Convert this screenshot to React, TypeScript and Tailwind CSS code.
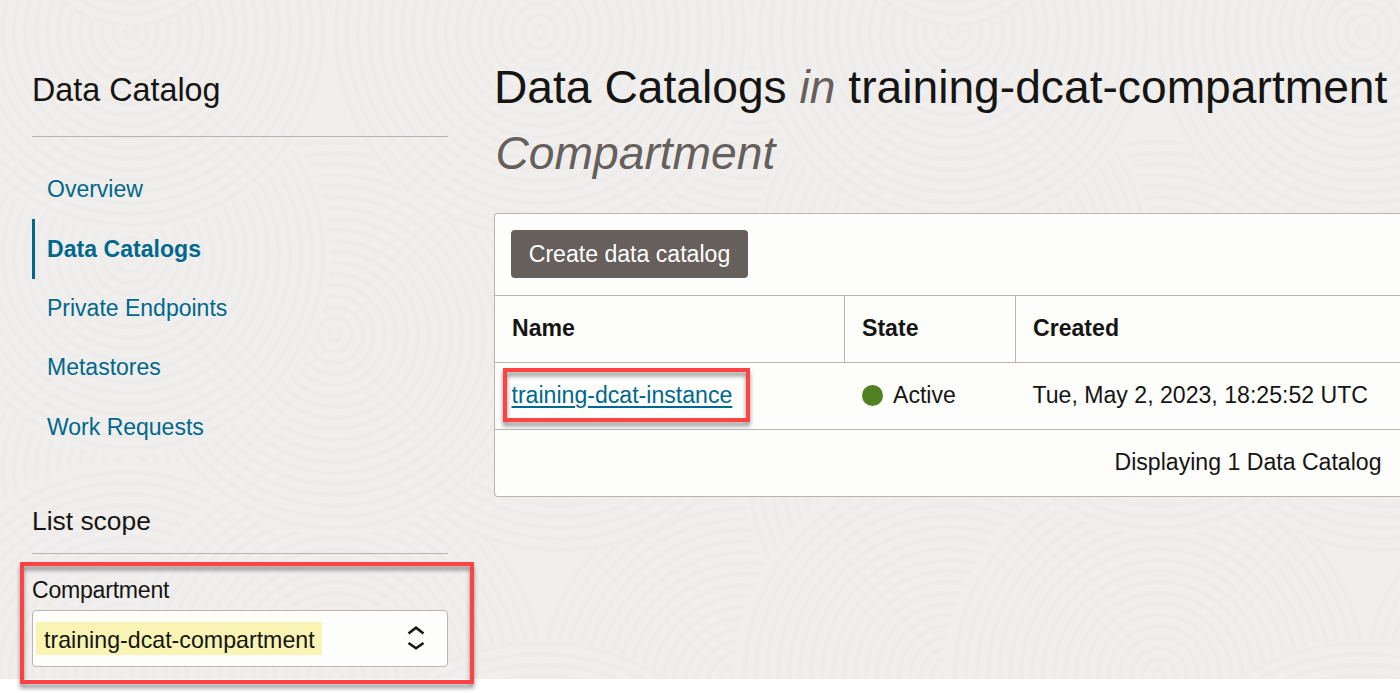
import { Fragment } from "react";

const TILE = 823;

const SWIRLS = [
  { x: 130, y: 470, r: 210 },
  { x: 750, y: 330, r: 210 },
  { x: 126, y: 676, r: 215 },
  { x: 745, y: 690, r: 215 },
  { x: 336, y: 676, r: 215 },
  { x: 540, y: 880, r: 240 },
  { x: 560, y: 335, r: 217 },
  { x: 335, y: 335, r: 200 },
  { x: 130, y: 255, r: 200 },
  { x: 750, y: 40, r: 195 },
  { x: 335, y: -120, r: 130 },
  { x: 130, y: 32, r: 200 },
  { x: 540, y: 32, r: 210 },
  { x: 336, y: -170, r: 150 },
  { x: 130, y: -80, r: 108 },
];

const RINGS = Array.from({ length: 24 }, (_, i) => 6 + i * 11);

function Texture() {
  return (
    <svg className="absolute inset-0 h-full w-full" aria-hidden="true">
      {[-TILE, 0, TILE].map((dx) => (
        <g key={dx} transform={`translate(${dx} 0)`}>
          {SWIRLS.map((s, i) => (
            <Fragment key={i}>
              <circle cx={s.x} cy={s.y} r={s.r} fill="#f0efed" />
              {RINGS.filter((r) => r < s.r).map((r) => (
                <circle key={r} cx={s.x} cy={s.y} r={r} fill="none" stroke="#edecea" strokeWidth="4.5" />
              ))}
            </Fragment>
          ))}
        </g>
      ))}
    </svg>
  );
}

const NAV = [
  { label: "Overview" },
  { label: "Data Catalogs", active: true },
  { label: "Private Endpoints" },
  { label: "Metastores" },
  { label: "Work Requests" },
];

function Sidebar() {
  return (
    <aside className="w-[416px] shrink-0">
      <h2 className="flex h-[137px] items-center border-b border-[#bab5af] pt-[45px] text-[32.3px] leading-none">
        Data Catalog
      </h2>
      <nav className="pt-[22.6px]">
        {NAV.map((item) => (
          <a
            key={item.label}
            className={
              item.active
                ? "flex h-[59.6px] items-center border-l-3 border-[#00688c] pt-px pl-3 font-bold text-[#00688c]"
                : "flex h-[59.4px] items-center pl-[15px] text-[23px] text-[#00688c]"
            }
          >
            {item.label}
          </a>
        ))}
      </nav>
      <h3 className="mt-[48.8px] flex h-[48px] items-start border-b border-[#bab5af] text-[26.4px] leading-[30px]">
        List scope
      </h3>
      <div className="relative pt-[21px]">
        <label className="block leading-[30px] tracking-[-0.25px]">Compartment</label>
        <div className="mt-[5px] flex h-[57px] items-center justify-between rounded border border-[#bab5af] bg-[#fdfdfc] pr-[22px] pl-[3px]">
          <span className="h-[33px] w-[286px] bg-[#f9f3b4] px-2 text-[23.2px] leading-[36px] whitespace-nowrap">
            training-dcat-compartment
          </span>
          <svg width="18" height="26" viewBox="0 0 18 26" fill="none" stroke="#161513" strokeWidth="2.5">
            <path d="M1.500 8.500 9 2.700l7.500 5.800M1.500 18 9 23.300l7.500-5.300" />
          </svg>
        </div>
        <div className="absolute top-[8px] -left-[12px] h-[122px] w-[454px] border-4 border-[#ff4343] drop-shadow-[0_4px_2px_rgba(0,0,0,0.42)]" />
      </div>
    </aside>
  );
}

function CatalogTable() {
  return (
    <section className="mt-[27px] rounded-l border border-r-0 border-[#bab5af] bg-[#fdfdfc]">
      <div className="flex h-[81px] items-start pt-4 pl-4">
        <button className="h-12 w-[237px] rounded bg-[#665f5b] pt-px text-center whitespace-nowrap text-white">
          Create data catalog
        </button>
      </div>
      <div className="grid h-[68px] grid-cols-[350px_171px_1fr] border-y border-[#bab5af] font-bold">
        <div className="flex items-center border-r border-[#bab5af] pl-[17px]">Name</div>
        <div className="flex items-center border-r border-[#bab5af] pl-[17px]">State</div>
        <div className="flex items-center pl-[17px]">Created</div>
      </div>
      <div className="grid h-[67px] grid-cols-[350px_171px_1fr] border-b border-[#bab5af]">
        <div className="relative flex items-center pl-[16.5px]">
          <a className="text-[#00688c] underline decoration-2 underline-offset-3">training-dcat-instance</a>
          <div className="absolute top-[5px] left-[8px] h-[54px] w-[247px] border-4 border-[#ff4343] drop-shadow-[0_4px_2px_rgba(0,0,0,0.42)]" />
        </div>
        <div className="flex items-center gap-[10px] pl-[17px]">
          <span className="mb-px h-[21px] w-[21px] rounded-full bg-[#508223]" />
          Active
        </div>
        <div className="flex items-center pl-[16.5px] whitespace-nowrap">Tue, May 2, 2023, 18:25:52 UTC</div>
      </div>
      <div className="flex h-[66px] items-center justify-end pr-[18.5px]">Displaying 1 Data Catalog</div>
    </section>
  );
}

export default function App() {
  return (
    <div className="h-[693px] overflow-hidden bg-white font-['Liberation_Sans',Arial,sans-serif] text-[23.1px] leading-none text-[#161513]">
      <div className="relative h-[679px] bg-[#f0efed]">
        <div className="absolute inset-0 overflow-hidden">
          <Texture />
        </div>
        <div className="relative flex gap-[46px] pl-8">
          <Sidebar />
          <main className="min-w-0 flex-1 pt-[54px]">
            <h1 className="text-[46.2px] leading-[66px] whitespace-nowrap">
              Data Catalogs <i className="text-[#665f5b]">in</i> training-dcat-compartment
              <i className="ml-[1.5px] block text-[#665f5b]">Compartment</i>
            </h1>
            <CatalogTable />
          </main>
        </div>
      </div>
    </div>
  );
}
